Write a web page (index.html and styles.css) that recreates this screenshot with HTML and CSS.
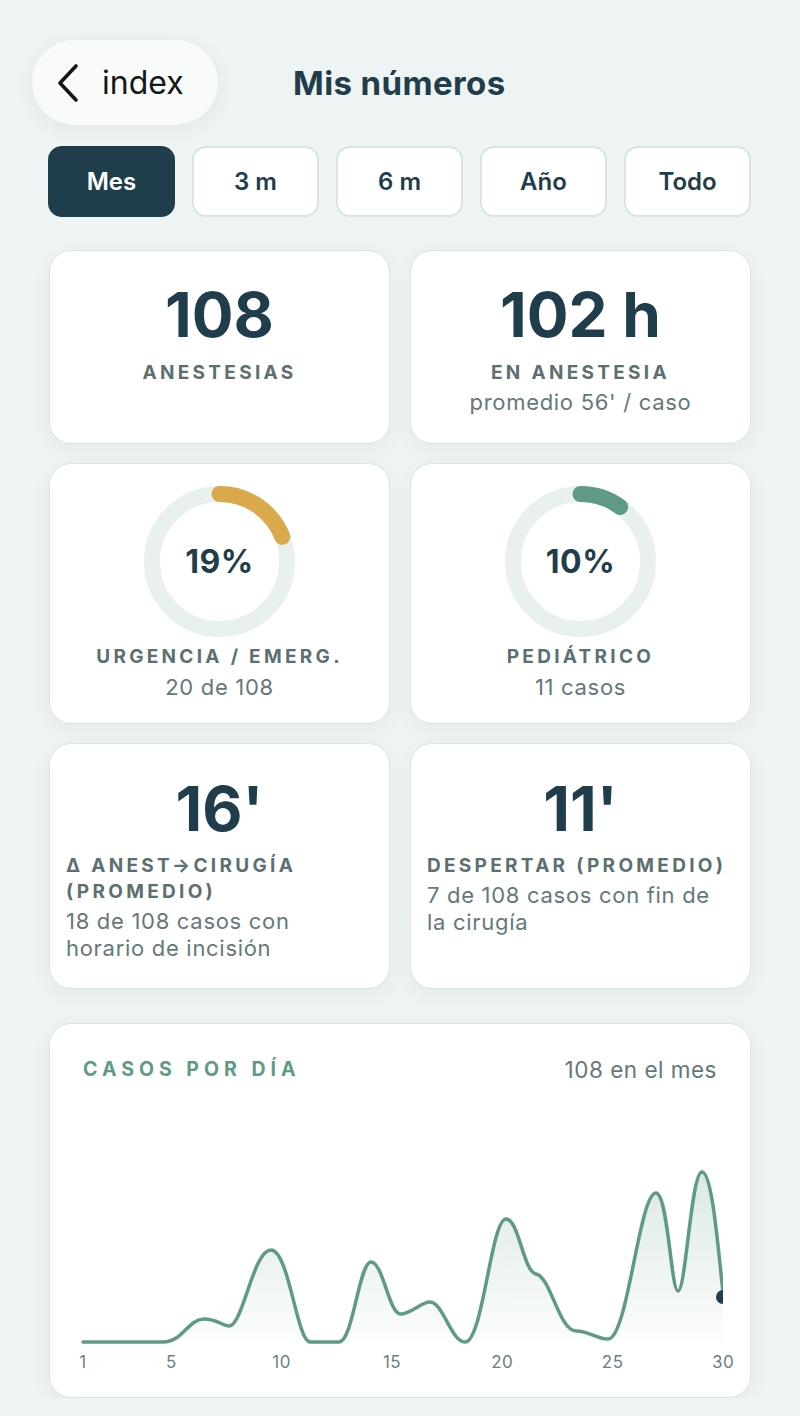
FILE: index.html
```html
<!DOCTYPE html>
<html lang="es">
<head>
  <meta charset="UTF-8">
  <meta name="viewport" content="width=device-width, initial-scale=1.0">
  <title>Mis números</title>
  <link rel="stylesheet" href="styles.css">
</head>
<body>
  <div class="page">
    <header class="topbar">
      <button type="button" class="backBtn">
        <svg class="chevron" width="24" height="40" viewBox="0 0 24 40">
          <path d="M20 3 L4 20 L20 37" fill="none" stroke="#161616" stroke-width="3.6" stroke-linecap="round" stroke-linejoin="round"/>
        </svg>
        <span>index</span>
      </button>
      <h1 class="title">Mis números</h1>
    </header>

    <div class="tabs">
      <button type="button" class="tab active">Mes</button>
      <button type="button" class="tab">3 m</button>
      <button type="button" class="tab">6 m</button>
      <button type="button" class="tab">Año</button>
      <button type="button" class="tab">Todo</button>
    </div>

    <div class="grid">
      <div class="card stat">
        <div class="bigNum">108</div>
        <div class="label">ANESTESIAS</div>
      </div>
      <div class="card stat">
        <div class="bigNum">102 h</div>
        <div class="label">EN ANESTESIA</div>
        <div class="sub">promedio 56' / caso</div>
      </div>

      <div class="card ringCard">
        <div class="ring">
          <svg width="151" height="151" viewBox="0 0 151 151">
            <circle cx="75.5" cy="75.5" r="67.5" fill="none" stroke="#e9f1ef" stroke-width="16"/>
            <circle cx="75.5" cy="75.5" r="67.5" fill="none" stroke="#d9a94b" stroke-width="16" stroke-linecap="round" stroke-dasharray="80.6 424.1" transform="rotate(-90 75.5 75.5)"/>
          </svg>
          <span class="pct">19%</span>
        </div>
        <div class="label">URGENCIA / EMERG.</div>
        <div class="sub">20 de 108</div>
      </div>
      <div class="card ringCard">
        <div class="ring">
          <svg width="151" height="151" viewBox="0 0 151 151">
            <circle cx="75.5" cy="75.5" r="67.5" fill="none" stroke="#e9f1ef" stroke-width="16"/>
            <circle cx="75.5" cy="75.5" r="67.5" fill="none" stroke="#5f9a86" stroke-width="16" stroke-linecap="round" stroke-dasharray="42.4 424.1" transform="rotate(-90 75.5 75.5)"/>
          </svg>
          <span class="pct">10%</span>
        </div>
        <div class="label">PEDIÁTRICO</div>
        <div class="sub">11 casos</div>
      </div>

      <div class="card stat leftText">
        <div class="bigNum">16'</div>
        <div class="label">Δ ANEST→CIRUGÍA (PROMEDIO)</div>
        <div class="sub">18 de 108 casos con horario de incisión</div>
      </div>
      <div class="card stat leftText">
        <div class="bigNum">11'</div>
        <div class="label">DESPERTAR (PROMEDIO)</div>
        <div class="sub">7 de 108 casos con fin de la cirugía</div>
      </div>
    </div>

    <div class="card chartCard">
      <div class="chartHead">
        <span class="chartTitle">CASOS POR DÍA</span>
        <span class="chartTotal">108 en el mes</span>
      </div>
      <svg class="chart" width="662" height="270" viewBox="-11 0 662 270">
        <defs>
          <linearGradient id="fade" x1="0" y1="0" x2="0" y2="1">
            <stop offset="0" stop-color="#5f9a86" stop-opacity="0.22"/>
            <stop offset="1" stop-color="#5f9a86" stop-opacity="0.02"/>
          </linearGradient>
          <clipPath id="plot">
            <rect x="-6" y="0" width="646" height="240"/>
          </clipPath>
        </defs>
        <g clip-path="url(#plot)">
          <path fill="url(#fade)" d="M0 231 L80 231 C100 231 105 208 121 208 C134 208 140 215 146 215 C160 215 170 139 188 139 C206 139 214 231 227 231 L256 231 C270 231 276 151 288 151 C300 151 306 203 317.5 203 C328 203 338 191 347 191 C360 191 368 231 382 231 C400 231 408 108 423 108 C436 108 440 160 453 163 C468 166 476 220 493 220 C505 220 515 228 525 228 C545 228 556 82 573 82 C585 82 588 180 595 180 C603 180 608 61 619 61 C630 61 636 150 641 190 L641 231 Z"/>
          <path fill="none" stroke="#5f9a86" stroke-width="3.5" stroke-linejoin="round" stroke-linecap="round" d="M0 231 L80 231 C100 231 105 208 121 208 C134 208 140 215 146 215 C160 215 170 139 188 139 C206 139 214 231 227 231 L256 231 C270 231 276 151 288 151 C300 151 306 203 317.5 203 C328 203 338 191 347 191 C360 191 368 231 382 231 C400 231 408 108 423 108 C436 108 440 160 453 163 C468 166 476 220 493 220 C505 220 515 228 525 228 C545 228 556 82 573 82 C585 82 588 180 595 180 C603 180 608 61 619 61 C630 61 636 150 641 190"/>
          <circle cx="640" cy="186" r="7" fill="#1f3d4b"/>
        </g>
        <g class="axis">
          <text x="0" y="257">1</text>
          <text x="88.3" y="257">5</text>
          <text x="198.6" y="257">10</text>
          <text x="309" y="257">15</text>
          <text x="419.3" y="257">20</text>
          <text x="529.7" y="257">25</text>
          <text x="640" y="257">30</text>
        </g>
      </svg>
    </div>
  </div>
</body>
</html>
```

FILE: styles.css
```css
body {
  margin: 0;
  background-color: #eef4f3;
  font-family: "Inter", "Noto Sans", sans-serif;
  color: #1f3d4b;
}

.page {
  padding: 40px 49px 0 49px;
}

.topbar {
  display: flex;
  align-items: center;
  margin-left: -17px;
  height: 85px;
}

.backBtn {
  display: flex;
  align-items: center;
  gap: 22px;
  height: 85px;
  width: 186px;
  padding: 0 0 0 24px;
  border: none;
  border-radius: 43px;
  background-color: #f9fbfb;
  box-shadow: 0 4px 18px rgba(40, 70, 80, 0.07);
  font-family: "Inter", sans-serif;
  font-size: 32px;
  color: #161616;
}

.chevron {
  display: block;
}

.title {
  margin: 0 0 0 75px;
  font-size: 33px;
  font-weight: 700;
  letter-spacing: 0.4px;
  color: #1f3d4b;
}

.tabs {
  display: grid;
  grid-template-columns: repeat(5, 1fr);
  gap: 17px;
  margin: 21px 0 0 -1px;
}

.tab {
  height: 71px;
  border: 2px solid #d5e6e1;
  border-radius: 14px;
  background-color: #fff;
  font-family: "Inter", sans-serif;
  font-size: 24px;
  font-weight: 600;
  color: #1f3d4b;
}

.tab.active {
  background-color: #1f3d4b;
  border-color: #1f3d4b;
  color: #fff;
}

.grid {
  display: grid;
  grid-template-columns: 1fr 1fr;
  grid-template-rows: 194px 261px 246px;
  gap: 19px 20px;
  margin-top: 33px;
}

.card {
  background-color: #fff;
  border: 1.5px solid #d8e5e2;
  border-radius: 22px;
  box-shadow: 0 6px 20px rgba(40, 70, 80, 0.05);
  box-sizing: border-box;
}

.stat {
  padding: 33px 16px 0;
  text-align: center;
}

.bigNum {
  font-size: 62px;
  font-weight: 700;
  line-height: 62px;
  color: #1f3d4b;
}

.label {
  margin-top: 14px;
  font-size: 19px;
  font-weight: 700;
  line-height: 26px;
  letter-spacing: 3.3px;
  color: #5d6f71;
}

.sub {
  margin-top: 3px;
  font-size: 22px;
  line-height: 27px;
  letter-spacing: 0.7px;
  color: #667879;
}

.leftText {
  padding-top: 34px;
  text-align: left;
}

.leftText .label {
  margin-top: 13px;
}

.leftText .bigNum {
  text-align: center;
}

.ringCard {
  padding: 22px 10px 0;
  text-align: center;
}

.ring {
  position: relative;
  width: 151px;
  height: 151px;
  margin: 0 auto;
}

.ring svg {
  display: block;
}

.pct {
  position: absolute;
  left: 0;
  right: 0;
  top: 0;
  line-height: 151px;
  font-size: 32px;
  font-weight: 700;
  letter-spacing: 0.5px;
  color: #1f3d4b;
}

.ringCard .label {
  margin-top: 7px;
}

.ringCard .sub {
  margin-top: 4px;
}

.chartCard {
  margin-top: 34px;
  padding: 33px 33px 16px;
}

.chartHead {
  display: flex;
  justify-content: space-between;
  align-items: center;
  height: 24px;
}

.chartTitle {
  font-size: 19.5px;
  font-weight: 700;
  letter-spacing: 5px;
  color: #5f9a86;
}

.chartTotal {
  font-size: 22.5px;
  letter-spacing: 0.5px;
  color: #65787a;
}

.chart {
  display: block;
  margin: 30px 0 0 -11px;
  overflow: visible;
}

.axis text {
  font-family: "Inter", sans-serif;
  font-size: 17px;
  letter-spacing: 0.5px;
  fill: #6f7f80;
  text-anchor: middle;
}
```
